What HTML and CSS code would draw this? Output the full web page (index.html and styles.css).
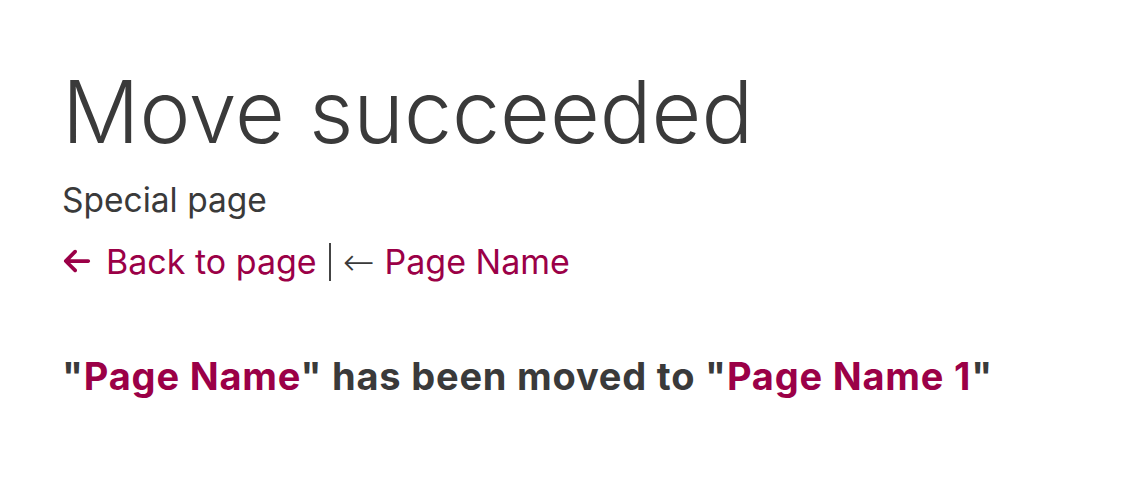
FILE: index.html
```html
<!DOCTYPE html>
<html lang="en">
  <head>
    <title>Move succeeded</title>
    <meta charset="UTF-8" />
    <link rel="stylesheet" href="styles.css">
  </head>
  <body>
    <div class="page">
      <h1 class="page-title">Move succeeded</h1>
      <div class="page-subtitle">Special page</div>
      <div class="back-links">
        <a class="back-link" href="#">
          <svg class="back-icon" viewBox="0 0 448 512" width="30" height="30"><path fill="currentColor" d="M9.4 233.4c-12.5 12.5-12.5 32.8 0 45.3l160 160c12.5 12.5 32.8 12.5 45.3 0s12.5-32.8 0-45.3L109.2 288H416c17.7 0 32-14.3 32-32s-14.3-32-32-32H109.3L214.6 118.6c12.5-12.5 12.5-32.8 0-45.3s-32.8-12.5-45.3 0l-160 160z"/></svg>
          Back to page</a><span class="sep"></span><a class="back-link" href="#"><span class="arrow">&larr;</span>Page Name</a>
      </div>
      <p class="result">"<a href="#">Page Name</a>" has been moved to "<a href="#">Page Name 1</a>"</p>
    </div>
  </body>
</html>
```

FILE: styles.css
```css
body {
  margin: 0;
  background: #fff;
  color: #3a3a3a;
  font-family: Inter, "Noto Sans", sans-serif;
}

.page {
  padding: 62px 62px 0 62px;
}

.page-title {
  margin: 0;
  font-size: 86px;
  font-weight: 300;
  line-height: 100px;
}

.page-subtitle {
  font-size: 33.5px;
  line-height: 44px;
  margin-top: 16px;
}

.back-links {
  display: flex;
  align-items: center;
  font-size: 34px;
  line-height: 44px;
  margin-top: 18px;
}

.back-link {
  color: #9b0047;
  text-decoration: none;
  display: flex;
  align-items: center;
  gap: 14px;
}

.back-icon {
  margin-top: -2px;
}

.sep {
  width: 2px;
  height: 38px;
  background: #444;
  margin: 0 12px 0 12px;
}

.arrow {
  font-family: "DejaVu Sans", sans-serif;
  font-weight: 300;
  font-size: 38px;
  margin-right: -4px;
  color: #3a3a3a;
}

.result {
  margin: 69px 0 0 0;
  font-size: 38px;
  font-weight: 700;
  letter-spacing: 0.8px;
}

.result a {
  color: #9b0047;
  text-decoration: none;
}
```
